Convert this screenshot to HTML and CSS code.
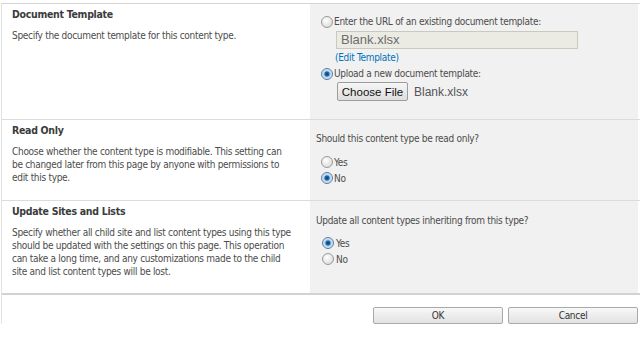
FILE: index.html
```html
<!DOCTYPE html>
<html lang="en">
<head>
<meta charset="UTF-8" />
<title>Content Type Settings</title>
<link rel="stylesheet" href="styles.css">
</head>
<body>
<div class="form">
    <div class="section template">
        <div class="desc">
            <h3>Document Template</h3>
            <p>Specify the document template for this content type.</p>
        </div>
        <div class="field">
            <label class="option"><span class="radio"></span>Enter the URL of an existing document template:</label>
            <div class="url-box">Blank.xlsx</div>
            <a class="edit-link" href="#">(Edit Template)</a>
            <label class="option"><span class="radio checked"></span>Upload a new document template:</label>
            <div class="upload">
                <button class="choose">Choose File</button>
                <span class="file-name">Blank.xlsx</span>
            </div>
        </div>
    </div>
    <div class="section readonly">
        <div class="desc">
            <h3>Read Only</h3>
            <p>Choose whether the content type is modifiable. This setting can<br>
            be changed later from this page by anyone with permissions to<br>
            edit this type.</p>
        </div>
        <div class="field">
            <div class="question">Should this content type be read only?</div>
            <label class="option"><span class="radio"></span>Yes</label>
            <label class="option"><span class="radio checked"></span>No</label>
        </div>
    </div>
    <div class="section update">
        <div class="desc">
            <h3>Update Sites and Lists</h3>
            <p>Specify whether all child site and list content types using this type<br>
            should be updated with the settings on this page. This operation<br>
            can take a long time, and any customizations made to the child<br>
            site and list content types will be lost.</p>
        </div>
        <div class="field">
            <div class="question">Update all content types inheriting from this type?</div>
            <label class="option"><span class="radio checked"></span>Yes</label>
            <label class="option"><span class="radio"></span>No</label>
        </div>
    </div>
    <div class="actions">
        <button class="action">OK</button>
        <button class="action">Cancel</button>
    </div>
</div>
</body>
</html>
```

FILE: styles.css
```css
* {
    margin: 0;
    padding: 0;
    box-sizing: border-box;
}
body {
    font-family: "DejaVu Sans Condensed", "DejaVu Sans", sans-serif;
    font-size: 10px;
    letter-spacing: -0.3px;
    color: #4c4c4c;
    background: #fff;
    width: 640px;
    height: 348px;
    overflow: hidden;
}
.form {
    margin-top: 3px;
    margin-left: 1px;
    border-left: 1px solid #e2e2e2;
    border-top: 1px solid #d4d4d4;
}
.section {
    display: flex;
    border-bottom: 1px solid #dcdcdc;
}
.section.update {
    border-bottom: 2px solid #d2d2d2;
}
.template { height: 116px; }
.readonly { height: 81px; }
.update { height: 94px; }
.desc {
    width: 308px;
    padding: 3px 10px 0 10px;
}
.desc h3 {
    font-size: 10.5px;
    font-weight: bold;
    letter-spacing: -0.3px;
    color: #3b3b3b;
    line-height: 14px;
    margin-bottom: 8px;
}
.desc p {
    line-height: 13px;
    white-space: nowrap;
}
.field {
    flex: 1;
    background: #f1f1f1;
    padding: 9px 0 0 11px;
    margin-right: 2px;
}
.option {
    display: flex;
    align-items: center;
    height: 17px;
    line-height: 17px;
}
.radio {
    width: 12px;
    height: 12px;
    border-radius: 50%;
    border: 1px solid #9a9a9a;
    background: radial-gradient(circle at 40% 35%, #ffffff 0%, #e4e4e4 60%, #cfcfcf 100%);
    margin-right: 1px;
    flex: none;
}
.radio.checked {
    background: radial-gradient(circle at 50% 50%, #0d3a66 0%, #1d6fb0 30%, #bcd4ea 45%, #eef4fa 100%);
    border-color: #5a7ea3;
}
.url-box {
    margin: 1px 0 0 15px;
    width: 242px;
    height: 18px;
    border: 1px solid #c9c9c0;
    background: #ebebe4;
    font-family: "Liberation Sans", Arial, sans-serif;
    font-size: 13px;
    letter-spacing: 0;
    color: #6d6d6d;
    line-height: 16px;
    padding-left: 4px;
}
.edit-link {
    display: block;
    margin: 2px 0 0 14px;
    line-height: 14px;
    color: #0072bc;
    text-decoration: none;
}
.upload {
    display: flex;
    align-items: center;
    margin-left: 16px;
    gap: 6px;
}
.choose {
    font-family: "Liberation Sans", Arial, sans-serif;
    font-size: 11.5px;
    letter-spacing: 0;
    color: #111;
    height: 19px;
    width: 71px;
    border: 1px solid #9c9c9c;
    border-radius: 2px;
    background: linear-gradient(#f6f6f6, #dedede);
}
.file-name {
    font-family: "Liberation Sans", Arial, sans-serif;
    font-size: 12px;
    letter-spacing: 0;
    color: #555;
}
.question {
    line-height: 14px;
}
.readonly .field {
    padding: 12px 0 0 6px;
}
.readonly .question {
    margin-bottom: 8px;
}
.readonly .option {
    height: 16px;
    margin-left: 5px;
}
.update .field {
    padding: 13px 0 0 6px;
}
.update .question {
    margin-bottom: 7px;
}
.update .option {
    height: 16px;
    margin-left: 6px;
}
.update .radio {
    margin-right: 2px;
}
.actions {
    display: flex;
    justify-content: flex-end;
    gap: 5px;
    padding: 12px 2px 0 0;
}
.action {
    width: 130px;
    height: 17px;
    font-family: "DejaVu Sans Condensed", "DejaVu Sans", sans-serif;
    font-size: 10px;
    letter-spacing: -0.3px;
    color: #333;
    border: 1px solid #a9a9a9;
    border-radius: 2px;
    background: linear-gradient(#f8f8f8, #e2e2e2);
}
```
